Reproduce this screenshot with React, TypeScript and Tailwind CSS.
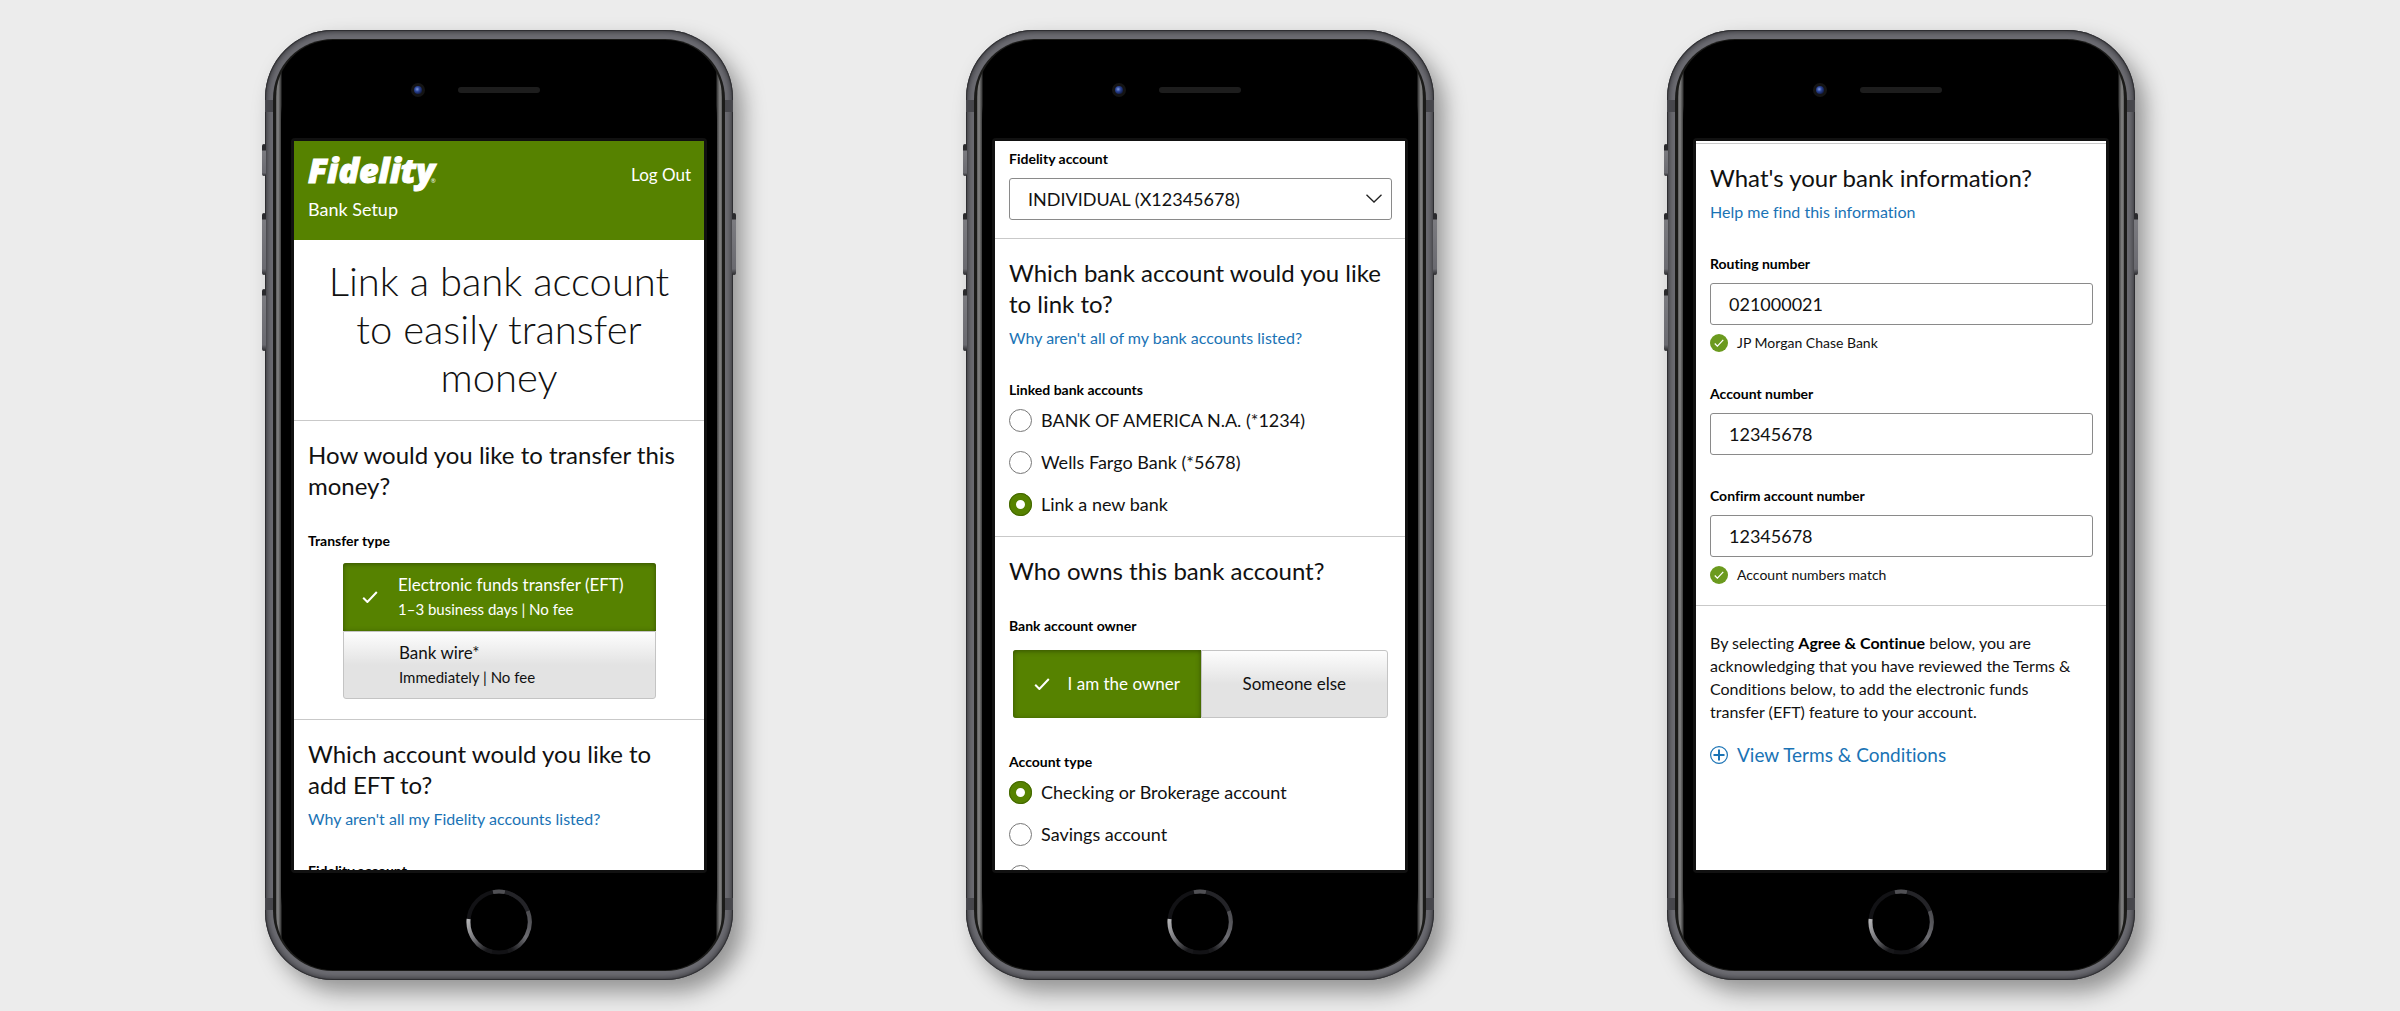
import { useState, type ReactNode } from "react";

function Check({ className }: { className: string }) {
  return (
    <svg viewBox="0 0 16 12" fill="none" className={className} aria-hidden="true">
      <path d="M1.2 6.8 5.4 11 14.8 1" stroke="currentColor" strokeWidth="2" />
    </svg>
  );
}

function SideButton({ className }: { className: string }) {
  return (
    <span
      className={`absolute w-1 rounded-xs bg-[linear-gradient(180deg,#2a2a2d,#2a2a2d_6px,#7b7b80_7px,#6a6a70_90%,#2a2a2d)] ${className}`}
    />
  );
}

function HomeButton() {
  return (
    <svg viewBox="0 0 66 66" className="size-[66px]" fill="none" strokeWidth="4" aria-hidden="true">
      <defs>
        <linearGradient id="homeLeft" x1="0" y1="0" x2="0.7" y2="1">
          <stop offset="0" stopColor="#b4b4b6" />
          <stop offset="0.5" stopColor="#77777b" />
          <stop offset="1" stopColor="#18181b" />
        </linearGradient>
        <linearGradient id="homeRight" x1="1" y1="0" x2="0.2" y2="1">
          <stop offset="0" stopColor="#4a4a4e" />
          <stop offset="0.5" stopColor="#6d6d72" />
          <stop offset="1" stopColor="#18181b" />
        </linearGradient>
      </defs>
      <circle cx="33" cy="33" r="30.5" stroke="#121215" />
      <path d="M27 3.1A30.5 30.5 0 0 1 39 3.1" stroke="#505054" />
      <path d="M39 3.1A30.5 30.5 0 0 1 61.8 22" stroke="#242428" />
      <path d="M2.6 30A30.5 30.5 0 0 0 26 62.7" stroke="url(#homeLeft)" />
      <path d="M61.8 22A30.5 30.5 0 0 1 42 62.1" stroke="url(#homeRight)" />
    </svg>
  );
}

function Phone({ label, children }: { label: string; children: ReactNode }) {
  return (
    <section
      aria-label={label}
      className="relative w-[468px] shrink-0 rounded-[68px] bg-[#6b6b71] px-2 py-[9px] shadow-[10px_12px_22px_rgba(0,0,0,0.38),inset_0_0_1px_1px_#2c2c2f,inset_0_0_4px_3px_#47474c]"
    >
      <SideButton className="-left-[3px] top-[114px] h-8" />
      <SideButton className="-left-[3px] top-[183px] h-[62px]" />
      <SideButton className="-left-[3px] top-[259px] h-[62px]" />
      <SideButton className="-right-[3px] top-[183px] h-[62px]" />
      <span className="absolute left-0 top-[70px] h-3 w-2 bg-[#47474c]" />
      <span className="absolute right-0 top-[70px] h-3 w-2 bg-[#47474c]" />
      <span className="absolute bottom-[70px] left-0 h-3 w-2 bg-[#47474c]" />
      <span className="absolute bottom-[70px] right-0 h-3 w-2 bg-[#47474c]" />
      <div className="rounded-[60px] bg-[#1b1b19] px-[3px] py-px">
        <div className="rounded-[57px] bg-[linear-gradient(90deg,#5c5c5c,#858585_2px,#3c3c3c_5px,#000_6px,#000_calc(100%-6px),#3c3c3c_calc(100%-5px),#858585_calc(100%-2px),#5c5c5c)] px-[5px] pt-px">
          <div className="rounded-[52px/80px] bg-black px-2.5">
            <div className="grid h-[97px] grid-cols-[1fr_auto_1fr] items-center">
              <span className="mr-[33px] flex size-3.5 items-center justify-center justify-self-end rounded-full bg-[#141414]">
                <span className="size-2 rounded-full bg-[radial-gradient(circle_at_40%_40%,#7f9ae0_0,#2c4596_35%,#142050_70%)]" />
              </span>
              <span className="h-1.5 w-[82px] rounded-full bg-[#1d1d1d]" />
            </div>
            <div className="rounded-sm bg-[#111] p-[3px]">
              <div className="h-[729px] overflow-hidden bg-white text-[#111]">{children}</div>
            </div>
            <div className="flex h-[97px] items-center justify-center">
              <HomeButton />
            </div>
          </div>
        </div>
      </div>
    </section>
  );
}

function Heading({ children }: { children: ReactNode }) {
  return <h2 className="text-2xl leading-[31px]">{children}</h2>;
}

function HelpLink({ children }: { children: ReactNode }) {
  return (
    <a href="#help" className="mt-[7px] block text-base text-[#1a73b5]">
      {children}
    </a>
  );
}

const labelClass = "block text-sm font-bold text-black";
const panelClass = "border-t border-[#c9c9c9] pl-3.5 pr-[13px] pt-[18px] pb-5";
const fieldClass =
  "mt-[9px] block h-[42px] w-full appearance-none rounded-[3px] border border-[#8a8a8a] bg-white pl-[18px] text-lg";
const onClass = "bg-[#568200] text-white shadow-[inset_0_1px_5px_#355000]";
const offClass =
  "border border-[#c4c4c4] bg-[linear-gradient(180deg,#fdfdfd,#e3e3e3_50%)] text-[#111]";

function RadioRow({ name, text, checked }: { name: string; text: string; checked?: boolean }) {
  return (
    <label className="flex h-6 items-center gap-[9px] text-lg leading-6 whitespace-nowrap">
      <input
        type="radio"
        name={name}
        defaultChecked={checked}
        className="size-[23px] shrink-0 appearance-none rounded-full border border-[#777] bg-white checked:border-[7px] checked:border-[#568200] checked:outline-1 checked:-outline-offset-1 checked:outline-[#416300]"
      />
      {text}
    </label>
  );
}

function TextField({ id, label, value }: { id: string; label: string; value: string }) {
  return (
    <div>
      <label htmlFor={id} className={labelClass}>
        {label}
      </label>
      <input id={id} type="text" defaultValue={value} className={fieldClass} />
    </div>
  );
}

function Confirmed({ children }: { children: ReactNode }) {
  return (
    <p className="mt-2 flex items-center gap-[9px] text-sm leading-5">
      <span className="flex size-[18px] items-center justify-center rounded-full bg-[#6b9a1e] text-white">
        <Check className="h-2 w-2.5" />
      </span>
      {children}
    </p>
  );
}

function TransferScreen() {
  const [type, setType] = useState("eft");
  const options = [
    { id: "eft", title: "Electronic funds transfer (EFT)", note: "1–3 business days | No fee" },
    { id: "wire", title: "Bank wire*", note: "Immediately | No fee" },
  ];
  return (
    <>
      <header className="h-[99px] bg-[#568200] pl-3.5 pr-[13px] pt-3 text-white">
        <div className="flex h-11 items-center justify-between">
          <span className="font-['Open_Sans',sans-serif] text-[34px] leading-11 font-extrabold italic [-webkit-text-stroke:1px_white]">
            Fidelity
            <span className="-ml-1 text-[6px] font-normal not-italic [-webkit-text-stroke:0]">®</span>
          </span>
          <a href="#logout" className="text-[17px]">
            Log Out
          </a>
        </div>
        <p className="text-lg leading-6">Bank Setup</p>
      </header>
      <h1 className="px-6 pt-[17px] pb-[19px] text-center text-[40px] leading-12 font-light">
        Link a bank account to easily transfer money
      </h1>
      <div className={panelClass}>
        <Heading>How would you like to transfer this money?</Heading>
        <p className={`mt-[30px] ${labelClass}`}>Transfer type</p>
        <div className="mx-[35px] mt-3" role="group" aria-label="Transfer type">
          {options.map((o) => (
            <button
              key={o.id}
              type="button"
              aria-pressed={type === o.id}
              onClick={() => setType(o.id)}
              className={`grid h-[68px] w-full grid-cols-[55px_1fr] items-center text-left first:rounded-t-[3px] last:rounded-b-[3px] ${type === o.id ? onClass : offClass}`}
            >
              <span className="pl-[19px]">{type === o.id && <Check className="h-3 w-4" />}</span>
              <span className="whitespace-nowrap">
                <span className="block text-[17px] leading-6">{o.title}</span>
                <span className="block text-[15px] leading-6">{o.note}</span>
              </span>
            </button>
          ))}
        </div>
      </div>
      <div className={panelClass}>
        <Heading>Which account would you like to add EFT to?</Heading>
        <HelpLink>Why aren't all my Fidelity accounts listed?</HelpLink>
        <p className={`mt-[30px] ${labelClass}`}>Fidelity account</p>
      </div>
    </>
  );
}

function BankScreen() {
  const [owner, setOwner] = useState("me");
  return (
    <>
      <div className="pl-3.5 pr-[13px] pt-2 pb-[18px]">
        <label htmlFor="fidelity-account" className={labelClass}>
          Fidelity account
        </label>
        <div className="relative">
          <select id="fidelity-account" className={fieldClass}>
            <option>INDIVIDUAL (X12345678)</option>
          </select>
          <svg
            viewBox="0 0 16 9"
            fill="none"
            className="pointer-events-none absolute top-4 right-2.5 h-[9px] w-4"
            aria-hidden="true"
          >
            <path d="M.5.7 8 8 15.500.7" stroke="#222" strokeWidth="1.300" />
          </svg>
        </div>
      </div>
      <div className={panelClass}>
        <Heading>Which bank account would you like to link to?</Heading>
        <HelpLink>Why aren't all of my bank accounts listed?</HelpLink>
        <fieldset className="mt-[30px]">
          <legend className={labelClass}>Linked bank accounts</legend>
          <div className="mt-2 grid gap-[18px]">
            <RadioRow name="bank" text="BANK OF AMERICA N.A. (*1234)" />
            <RadioRow name="bank" text="Wells Fargo Bank (*5678)" />
            <RadioRow name="bank" text="Link a new bank" checked />
          </div>
        </fieldset>
      </div>
      <div className={panelClass}>
        <Heading>Who owns this bank account?</Heading>
        <p className={`mt-[30px] ${labelClass}`}>Bank account owner</p>
        <div className="mx-1 mt-3.5 grid h-[68px] grid-cols-2 text-[17px]" role="group" aria-label="Bank account owner">
          <button
            type="button"
            aria-pressed={owner === "me"}
            onClick={() => setOwner("me")}
            className={`flex items-center justify-center gap-[18px] rounded-l-[3px] ${owner === "me" ? onClass : offClass}`}
          >
            {owner === "me" && <Check className="h-3 w-4" />}I am the owner
          </button>
          <button
            type="button"
            aria-pressed={owner === "other"}
            onClick={() => setOwner("other")}
            className={`flex items-center justify-center gap-[18px] rounded-r-[3px] ${owner === "other" ? onClass : offClass}`}
          >
            {owner === "other" && <Check className="h-3 w-4" />}Someone else
          </button>
        </div>
        <fieldset className="mt-[34px]">
          <legend className={labelClass}>Account type</legend>
          <div className="mt-2 grid gap-[18px]">
            <RadioRow name="kind" text="Checking or Brokerage account" checked />
            <RadioRow name="kind" text="Savings account" />
            <RadioRow name="kind" text="Business account" />
          </div>
        </fieldset>
      </div>
    </>
  );
}

function DetailsScreen() {
  return (
    <div className="pt-0.5">
      <div className={panelClass}>
        <Heading>What's your bank information?</Heading>
        <HelpLink>Help me find this information</HelpLink>
        <div className="mt-[30px] grid gap-[31px]">
          <div>
            <TextField id="routing" label="Routing number" value="021000021" />
            <Confirmed>JP Morgan Chase Bank</Confirmed>
          </div>
          <TextField id="account" label="Account number" value="12345678" />
          <div>
            <TextField id="confirm" label="Confirm account number" value="12345678" />
            <Confirmed>Account numbers match</Confirmed>
          </div>
        </div>
      </div>
      <div className="border-t border-[#c9c9c9] pl-3.5 pr-[22px] pt-[25px]">
        <p className="text-base leading-[23px]">
          By selecting <b className="text-black">Agree &amp; Continue</b> below, you are acknowledging that you have
          reviewed the Terms &amp; Conditions below, to add the electronic funds transfer (EFT) feature to your account.
        </p>
        <button type="button" className="mt-5 flex items-center gap-[9px] text-[19px] leading-6 text-[#1a73b5]">
          <svg viewBox="0 0 18 18" className="size-[18px]" fill="none" stroke="currentColor" aria-hidden="true">
            <circle cx="9" cy="9" r="8.400" strokeWidth="1.200" />
            <path d="M9 3.500v11M3.500 9h11" strokeWidth="2" />
          </svg>
          View Terms &amp; Conditions
        </button>
      </div>
    </div>
  );
}

export default function App() {
  return (
    <main className="flex min-h-screen flex-wrap items-start justify-center gap-x-[233px] gap-y-16 bg-[#ececec] pt-[30px] pb-[30px] font-[Lato,sans-serif] [font-variant-ligatures:none]">
      <Phone label="Transfer type">
        <TransferScreen />
      </Phone>
      <Phone label="Bank account">
        <BankScreen />
      </Phone>
      <Phone label="Bank information">
        <DetailsScreen />
      </Phone>
    </main>
  );
}
